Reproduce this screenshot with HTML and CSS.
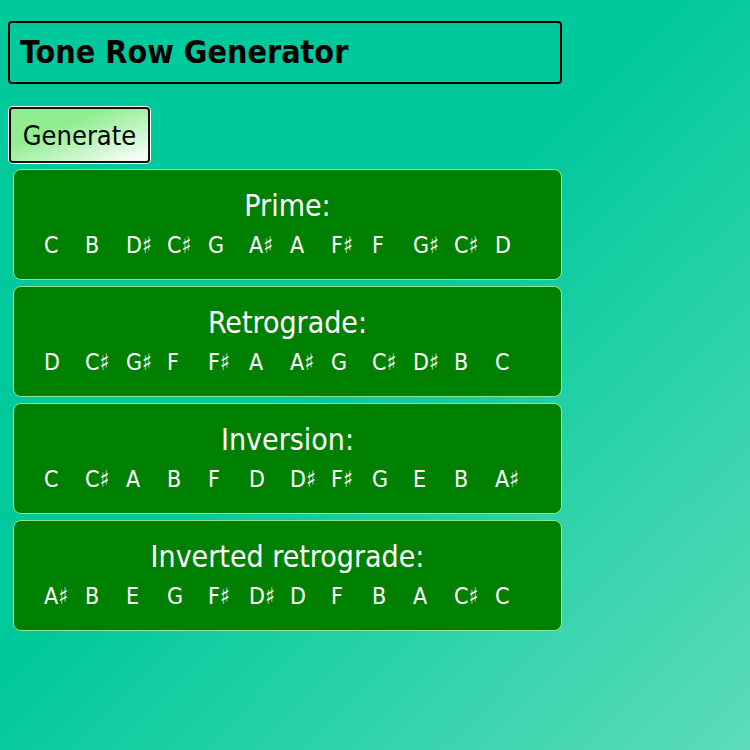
FILE: index.html
```html
<!DOCTYPE html>
<html>
<head>
<meta charset="utf-8">
<link rel="stylesheet" href="styles.css">
</head>
<body>
<h1 class="title">Tone Row Generator</h1>
<button class="gen">Generate</button>
<div class="rows">
  <div class="card">
    <div class="card-title">Prime:</div>
    <div class="notes"><span>C</span><span>B</span><span>D♯</span><span>C♯</span><span>G</span><span>A♯</span><span>A</span><span>F♯</span><span>F</span><span>G♯</span><span>C♯</span><span>D</span></div>
  </div>
  <div class="card">
    <div class="card-title">Retrograde:</div>
    <div class="notes"><span>D</span><span>C♯</span><span>G♯</span><span>F</span><span>F♯</span><span>A</span><span>A♯</span><span>G</span><span>C♯</span><span>D♯</span><span>B</span><span>C</span></div>
  </div>
  <div class="card">
    <div class="card-title">Inversion:</div>
    <div class="notes"><span>C</span><span>C♯</span><span>A</span><span>B</span><span>F</span><span>D</span><span>D♯</span><span>F♯</span><span>G</span><span>E</span><span>B</span><span>A♯</span></div>
  </div>
  <div class="card">
    <div class="card-title">Inverted retrograde:</div>
    <div class="notes"><span>A♯</span><span>B</span><span>E</span><span>G</span><span>F♯</span><span>D♯</span><span>D</span><span>F</span><span>B</span><span>A</span><span>C♯</span><span>C</span></div>
  </div>
</div>
</body>
</html>
```
FILE: styles.css
```css
html {
  min-height: 100%;
  background: linear-gradient(to bottom right, #00c99b 45%, #5ddcbb);
  background-attachment: fixed;
}
body {
  margin: 0;
  padding: 8px;
  width: 554px;
  font-family: "DejaVu Sans Condensed", "DejaVu Sans", sans-serif;
}
.title {
  margin: 13px 0 0;
  height: 63px;
  box-sizing: border-box;
  border: 2px solid #000;
  border-radius: 4px;
  padding: 0 10px;
  font-size: 32px;
  line-height: 59px;
  font-weight: bold;
  color: #000;
}
.gen {
  margin: 23px 0 0 1px;
  width: 141px;
  height: 56px;
  font-family: inherit;
  font-size: 27px;
  color: #000;
  background: linear-gradient(to bottom right, #90ee90 35%, #ffffff);
  border: 2px solid #111;
  border-radius: 4px;
  box-shadow: 0 0 0 1px #fff;
  padding: 0;
  display: block;
}
.rows {
  margin: 6px 0 0 5px;
  display: flex;
  flex-direction: column;
  gap: 6px;
}
.card {
  background: #008000;
  border: 1px solid #8fe88f;
  border-radius: 8px;
  height: 111px;
  box-sizing: border-box;
  color: #fff;
  padding-top: 18px;
}
.card-title {
  text-align: center;
  font-size: 30px;
  line-height: 36px;
}
.notes {
  padding-left: 30px;
  margin-top: 8px;
  font-size: 23px;
  line-height: 26px;
  display: flex;
}
.notes span {
  width: 41px;
  flex: none;
}
```
